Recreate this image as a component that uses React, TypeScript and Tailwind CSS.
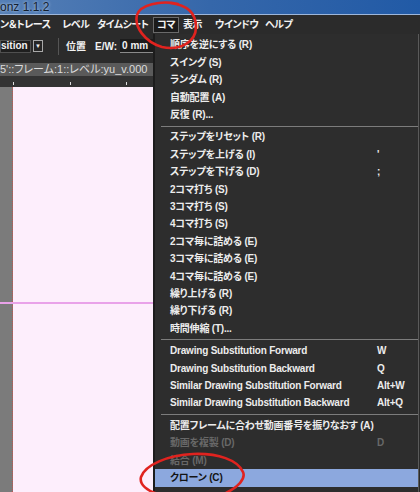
import type { ReactNode } from 'react'

const UI = "font-['Liberation_Sans','Noto_Sans_CJK_JP',sans-serif] [font-feature-settings:'palt']"

type MenuItem = { label: string; key?: string; disabled?: boolean; active?: boolean } | 'sep'

const MENU: MenuItem[] = [
  { label: '順序を逆にする (R)' },
  { label: 'スイング (S)' },
  { label: 'ランダム (R)' },
  { label: '自動配置 (A)' },
  { label: '反復 (R)...' },
  'sep',
  { label: 'ステップをリセット (R)' },
  { label: 'ステップを上げる (I)', key: "'" },
  { label: 'ステップを下げる (D)', key: ';' },
  { label: '2コマ打ち (S)' },
  { label: '3コマ打ち (S)' },
  { label: '4コマ打ち (S)' },
  { label: '2コマ毎に詰める (E)' },
  { label: '3コマ毎に詰める (E)' },
  { label: '4コマ毎に詰める (E)' },
  { label: '繰り上げる (R)' },
  { label: '繰り下げる (R)' },
  { label: '時間伸縮 (T)...' },
  'sep',
  { label: 'Drawing Substitution Forward', key: 'W' },
  { label: 'Drawing Substitution Backward', key: 'Q' },
  { label: 'Similar Drawing Substitution Forward', key: 'Alt+W' },
  { label: 'Similar Drawing Substitution Backward', key: 'Alt+Q' },
  'sep',
  { label: '配置フレームに合わせ動画番号を振りなおす (A)' },
  { label: '動画を複製 (D)', key: 'D', disabled: true },
  { label: '結合 (M)', disabled: true },
  { label: 'クローン (C)', active: true },
]

function TopItem({ w, children }: { w: string; children: ReactNode }) {
  return <span className={`shrink-0 whitespace-nowrap ${w}`}>{children}</span>
}

function Menu() {
  return (
    <div
      className={`absolute left-[153px] top-[34px] bottom-0 w-[266px] border-l-2 border-r border-l-[#1c1c1c] border-r-[#5a5a5a] bg-[#2d2d2d] pt-[2.7px] text-[10px] font-bold tracking-[-0.2px] ${UI}`}
    >
      {MENU.map((m, i) =>
        m === 'sep' ? (
          <div key={i} className="flex h-[5.1px] items-center pl-[6px]">
            <div className="h-px flex-1 bg-[#7c7c7c]" />
          </div>
        ) : (
          <div
            key={i}
            className={`flex h-[17.4px] items-center pl-[15px] leading-none ${
              m.active ? 'bg-[#8ca8de] text-[#141414]' : m.disabled ? 'text-[#686868]' : 'text-[#ececec]'
            }`}
          >
            <span className="w-[207px] shrink-0 whitespace-nowrap">{m.label}</span>
            <span className="whitespace-nowrap">{m.key}</span>
          </div>
        ),
      )}
    </div>
  )
}

export default function App() {
  return (
    <div className={`relative flex h-[492px] w-[420px] flex-col overflow-hidden bg-[#2b2b2b] ${UI}`}>
      {/* タイトルバー */}
      <div className="flex h-[15px] items-center border-b border-[#9db6da] bg-gradient-to-r from-[#557fb6] via-[#3567aa] to-[#215aa6]">
        <span className="text-[12px] leading-none text-[#13202f] [text-shadow:0_0_3px_#cfe0f5]">onz 1.1.2</span>
      </div>

      {/* メニューバー */}
      <div className="flex h-[19px] items-center text-[10px] font-bold tracking-[-0.5px] text-[#f2f2f2]">
        <TopItem w="w-[62px]">ン＆トレース</TopItem>
        <TopItem w="w-[35px]">レベル</TopItem>
        <TopItem w="w-[56px]">タイムシート</TopItem>
        <TopItem w="w-[30px]">
          <span className="flex h-[16px] w-[26px] items-center justify-center border border-[#6a6a6a] bg-[#1b1b1b]">コマ</span>
        </TopItem>
        <TopItem w="w-[32px]">表示</TopItem>
        <TopItem w="w-[50px]">ウインドウ</TopItem>
        <TopItem w="">ヘルプ</TopItem>
      </div>

      {/* ツールバー */}
      <div className="flex h-[29px] items-center pb-[5px] text-[10px] font-bold text-[#f2f2f2]">
        <span className="flex h-[13px] w-[31px] items-center border border-[#505050] bg-[#1f1f1f] leading-none">sition</span>
        <span className="ml-[2px] flex h-[12px] w-[10px] items-center justify-center border border-[#a9a9a9] bg-[#262626] text-[6px] leading-none">
          ▼
        </span>
        <span className="ml-[15px] h-[17px] w-px bg-[#555]" />
        <span className="ml-[7px]">位置</span>
        <span className="ml-[9px]">E/W:</span>
        <span className="ml-[3px] flex h-[14px] w-[34px] items-center border-b border-[#8a8a8a] bg-[#1c1c1c] pl-[2px] leading-none">
          0 mm
        </span>
      </div>

      {/* レベル情報 */}
      <div className="flex h-[13px] w-[153px] items-center overflow-hidden whitespace-nowrap bg-[#5a5a5a] text-[11px] leading-none text-[#dcdcdc]">
        5'::フレーム:1::レベル:yu_v.000
      </div>

      {/* ルーラー */}
      <div className="relative h-[11px] w-[153px] bg-[#333]">
        <span className="absolute bottom-[2px] left-[13px] h-[3px] w-px bg-[#ddd]" />
        <span className="absolute bottom-[2px] left-[70px] h-[3px] w-px bg-[#ddd]" />
        <span className="absolute bottom-[2px] left-[126px] h-[3px] w-px bg-[#ddd]" />
      </div>

      {/* ビューア */}
      <div className="flex flex-1">
        <div className="flex w-[153px]">
          <div className="w-[13px] border-r border-dotted border-r-[#c2544f] bg-[#7b7b7b]" />
          <div className="flex-1 bg-[#fdeefc]" />
        </div>
      </div>
      <div className="absolute left-0 top-[302px] h-[2px] w-[153px] bg-[#e9a2e9]" />

      <Menu />

      {/* 赤丸の注記 */}
      <svg className="pointer-events-none absolute inset-0" width="420" height="492" viewBox="0 0 420 492" fill="none">
        <path
          d="M178 4 C160 0 140 5 137 15 C134 27 145 42 162 47 C180 51 196 42 196 27 C196 14 188 5 170 3"
          stroke="#e0231f"
          strokeWidth="2.6"
          strokeLinecap="round"
        />
        <path
          d="M226 493 C238 487 246 479 243 472 C238 460 218 453 193 454 C168 455 145 465 141 477 C139 485 148 491 158 494"
          stroke="#e0231f"
          strokeWidth="2.6"
          strokeLinecap="round"
        />
      </svg>
    </div>
  )
}
